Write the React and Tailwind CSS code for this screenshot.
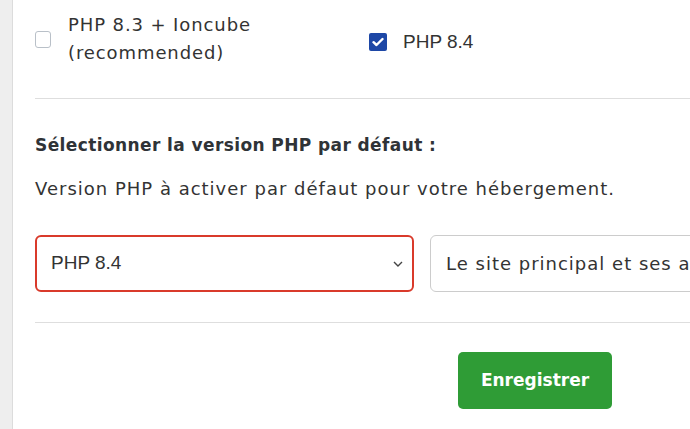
export default function App() {
  const poppins = { fontFamily: '"DejaVu Sans", "Noto Sans", sans-serif' };
  const helv = { fontFamily: '"Liberation Sans", Arial, sans-serif' };

  return (
    <div className="flex h-[429px] w-[690px] overflow-hidden bg-white">
      {/* left rail */}
      <div className="h-full w-[13px] shrink-0 border-r border-[#dcdcdc] bg-[#eeeeee]" />

      <div className="min-w-0 flex-1 pl-[22px]">
        <div className="w-[760px]">
          {/* php versions */}
          <div className="flex h-[99px] items-start border-b border-[#dedede] pt-[11px]">
            <label className="flex w-[334px] items-start gap-[17px]">
              <span className="mt-[20px] h-[17px] w-[16px] shrink-0 rounded-[3px] border border-[#b9c0c8] bg-white" />
              <span className="text-[18px] leading-[28px] tracking-[0.9px] text-[#333]" style={poppins}>
                PHP 8.3 + Ioncube
                <br />
                (recommended)
              </span>
            </label>
            <label className="flex items-center gap-[16px] pt-[19px]" style={helv}>
              <span className="flex h-[18px] w-[18px] items-center justify-center rounded-[2px] bg-[#1d47a6]">
                <svg width="12" height="10" viewBox="0 0 12 10">
                  <path d="M1.5 5.2 L4.5 8 L10.5 2" fill="none" stroke="white" strokeWidth="2.4" strokeLinecap="round" strokeLinejoin="round" />
                </svg>
              </span>
              <span className="text-[19px] leading-[24px] text-[#333]">PHP 8.4</span>
            </label>
          </div>

          {/* default version */}
          <div className="border-b border-[#dedede] pb-[30px]" style={poppins}>
            <h3 className="mt-[33px] text-[17px] font-bold leading-[26px] tracking-[0.4px] text-[#2f3337]">
              Sélectionner la version PHP par défaut :
            </h3>
            <p className="mt-[18px] text-[18px] leading-[26px] tracking-[1px] text-[#333]">
              Version PHP à activer par défaut pour votre hébergement.
            </p>
            <div className="mt-[33px] flex gap-[16px]">
              <div className="flex h-[57px] w-[379px] items-center justify-between rounded-[6px] border-2 border-[#d93a2b] pl-[14px] pr-[8px]" style={helv}>
                <span className="text-[19px] text-[#333]">PHP 8.4</span>
                <svg width="12" height="8" viewBox="0 0 12 8">
                  <path d="M2 2 L6 6 L10 2" fill="none" stroke="#444" strokeWidth="1.4" />
                </svg>
              </div>
              <div className="flex h-[57px] w-[340px] items-center rounded-[6px] border border-[#cccccc] pl-[15px]">
                <span className="whitespace-nowrap text-[18px] tracking-[1px] text-[#333]">Le site principal et ses alias</span>
              </div>
            </div>
          </div>

          {/* save */}
          <div className="pl-[423px] pt-[29px]">
            <button
              className="h-[57px] w-[154px] rounded-[5px] bg-[#2f9c36] text-[17px] font-bold text-white"
              style={poppins}
            >
              Enregistrer
            </button>
          </div>
        </div>
      </div>
    </div>
  );
}
